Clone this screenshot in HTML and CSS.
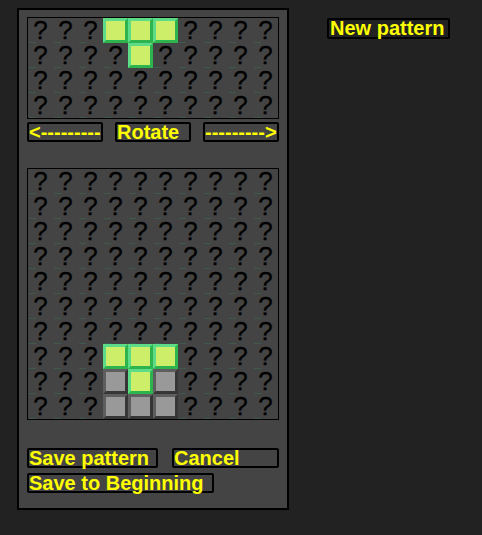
FILE: index.html
```html
<!DOCTYPE html>
<html lang="en">
<head>
    <meta charset="UTF-8">
    <meta name="viewport" content="width=device-width, initial-scale=1.0">
    <title>Pattern editor</title>
    <link rel="stylesheet" href="styles.css">
</head>
<body>
    <div class="wrap">
        <div class="panel">
            <div class="grid grid-small" id="preview"></div>
            <div class="row-top">
                <div class="btn btn-third">&lt;---------</div>
                <div class="btn btn-third">Rotate</div>
                <div class="btn btn-third">---------&gt;</div>
            </div>

            <div class="grid grid-big" id="board"></div>

            <div class="row-save">
                <div class="btn btn-save">Save pattern</div>
                <div class="btn btn-cancel">Cancel</div>
            </div>
            <div class="btn btn-begin">Save to Beginning</div>
        </div>

        <div class="btn btn-new">New pattern</div>
    </div>

    <script>
        // g = green piece, x = grey block, . = empty
        var preview = [
            "...ggg....",
            "....g.....",
            "..........",
            ".........."
        ];
        var board = [
            "..........",
            "..........",
            "..........",
            "..........",
            "..........",
            "..........",
            "..........",
            "...ggg....",
            "...xgx....",
            "...xxx...."
        ];

        function draw(el, rows) {
            var html = "";
            for (var r = 0; r < rows.length; r++) {
                for (var c = 0; c < rows[r].length; c++) {
                    var ch = rows[r][c];
                    if (ch == "g") html += '<div class="cell block green"></div>';
                    else if (ch == "x") html += '<div class="cell block grey"></div>';
                    else html += '<div class="cell"><span class="q">?</span></div>';
                }
            }
            el.innerHTML = html;
        }

        draw(document.getElementById("preview"), preview);
        draw(document.getElementById("board"), board);
    </script>
</body>
</html>
```

FILE: styles.css
```css
*{ margin: 0; padding: 0; box-sizing: border-box;}
body{ background: #222; font-family: "Liberation Sans", Arial, sans-serif;}

.wrap{ display: flex; align-items: flex-start; padding: 8px 0 0 17px;}

.panel{ width: 272px; height: 502px; background: #444; border: 2px solid #000; padding: 7px 8px 15px;}

.grid{ display: grid; grid-template-columns: repeat(10, 25px); grid-auto-rows: 25px; border: 1px solid #000; width: 252px;}
.grid-big{ margin-top: 26px;}

.cell{ position: relative; text-align: center;}
.cell::after{ content: ""; position: absolute; left: 1px; bottom: 0; width: 7px; height: 1px; background: #3e5a4a;}
.q{ display: block; font-size: 26px; line-height: 25px; height: 25px; color: #000; -webkit-text-stroke: 0.3px #000;}
.block::after{ display: none;}

.block{ border: 3px solid; }
.green{ background: #cdee69; border-color: #5cdc86 #2db44f #2db44f #5cdc86;}
.grey{ background: #999; border-color: #5e5e5e #363636 #363636 #5e5e5e;}

.btn{ height: 20px; border: 2px solid #000; border-radius: 2px; background: #444; color: #ff0; font-weight: bold; font-size: 20px; line-height: 16px; white-space: nowrap;}

.row-top{ display: flex; justify-content: space-between; margin-top: 3px;}
.btn-third{ width: 76px;}

.row-save{ display: flex; gap: 14px; margin-top: 28px;}
.btn-save{ width: 131px;}
.btn-cancel{ width: 107px;}
.btn-begin{ width: 187px; margin-top: 5px;}

.btn-new{ margin: 10px 0 0 38px; height: 21px; padding: 0 4px 0 1px; background: #222;}
```
